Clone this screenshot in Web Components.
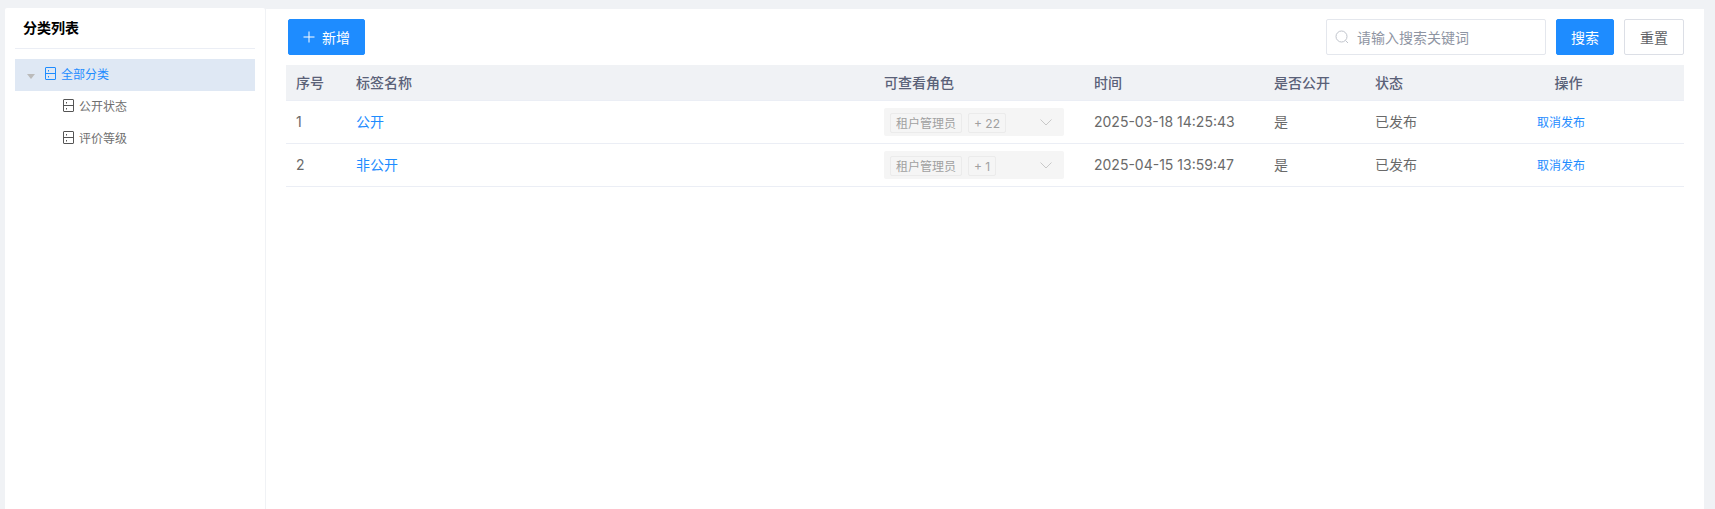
<!DOCTYPE html>
<html lang="zh">
<head>
<meta charset="utf-8">
<title>分类列表</title>
<style>
html, body { margin: 0; height: 100%; background: #f0f2f5; overflow: hidden; }
body { font-family: Inter, "Noto Sans CJK SC", sans-serif; font-size: 14px; }
</style>
</head>
<body>
<app-page></app-page>
<script>
const FOLDER_ICON = /* html */ `
<svg width="11" height="13" viewBox="0 0 11 13" fill="none" stroke="currentColor" stroke-width="1">
  <rect x=".5" y=".5" width="10" height="12" rx=".5"/>
  <path d="M.5 6.500h10M3.500 3v1.500M3.500 9v1.500"/>
</svg>`;

class TreeNode extends HTMLElement {
  constructor() {
    super();
    const root = this.attachShadow({ mode: 'open' });
    root.innerHTML = /* html */ `
<style>
:host {
  display: flex;
  align-items: center;
  height: 32px;
  padding-left: 48px;
  color: #707070;
  font-size: 12px;
}
:host([selected]) {
  background: #dfe8f4;
  color: #1e8cff;
  padding-left: 12px;
}
.arrow {
  display: none;
  width: 0;
  height: 0;
  margin: 2px 10px 0 0;
  border: 4px solid transparent;
  border-top: 5px solid #bbb;
  border-bottom: 0;
}
:host([selected]) .arrow { display: block; }
.icon { display: flex; margin: -3px 5px 0 0; color: #555; }
:host([selected]) .icon { color: #1e8cff; }
.label { padding-bottom: 4px; }
</style>
<span class="arrow"></span>
<span class="icon">${FOLDER_ICON}</span>
<span class="label"><slot></slot></span>`;
  }
}
customElements.define('tree-node', TreeNode);

class CategoryTree extends HTMLElement {
  constructor() {
    super();
    const root = this.attachShadow({ mode: 'open' });
    root.innerHTML = /* html */ `
<style>
:host {
  display: block;
  flex: none;
  width: 240px;
  padding: 0 10px;
  background: #fff;
  border-radius: 2px 2px 0 0;
}
h2 {
  height: 40px;
  margin: 0 0 10px;
  padding-left: 8px;
  border-bottom: 1px solid #ebeef5;
  color: #000;
  font-size: 14px;
  font-weight: 600;
  line-height: 39px;
}
</style>
<h2>分类列表</h2>
<tree-node selected>全部分类</tree-node>
<tree-node>公开状态</tree-node>
<tree-node>评价等级</tree-node>`;
  }
}
customElements.define('category-tree', CategoryTree);

class AppButton extends HTMLElement {
  constructor() {
    super();
    const root = this.attachShadow({ mode: 'open' });
    root.innerHTML = /* html */ `
<style>
:host {
  display: inline-flex;
  align-items: center;
  justify-content: center;
  box-sizing: border-box;
  height: 36px;
  border: 1px solid #dcdfe6;
  border-radius: 2px;
  background: #fff;
  color: #606266;
  font-size: 14px;
  cursor: pointer;
}
:host([primary]) {
  border-color: #1e8cff;
  background: #1e8cff;
  color: #fff;
}
</style>
<slot></slot>`;
  }
}
customElements.define('app-button', AppButton);

class SearchBox extends HTMLElement {
  constructor() {
    super();
    const root = this.attachShadow({ mode: 'open' });
    root.innerHTML = /* html */ `
<style>
:host {
  display: flex;
  align-items: center;
  box-sizing: border-box;
  width: 220px;
  height: 36px;
  padding-left: 8px;
  border: 1px solid #e4e7ed;
  border-radius: 2px;
  background: #fff;
  color: #8f95a3;
  font-size: 14px;
}
svg { flex: none; margin-right: 8px; }
</style>
<svg width="14" height="14" viewBox="0 0 14 14" fill="none" stroke="#c0c4cc" stroke-width="1">
  <circle cx="6.500" cy="6.500" r="5.500"/>
  <path d="M10.500 10.500l2.500 2.500"/>
</svg>
<slot></slot>`;
  }
}
customElements.define('search-box', SearchBox);

class TagToolbar extends HTMLElement {
  constructor() {
    super();
    const root = this.attachShadow({ mode: 'open' });
    root.innerHTML = /* html */ `
<style>
:host {
  display: flex;
  align-items: center;
  height: 36px;
  margin: 0 20px 10px 22px;
}
.spacer { flex: 1; }
.add { width: 77px; gap: 7px; }
.search { width: 58px; margin: 0 10px; }
.reset { width: 60px; }
svg { flex: none; }
</style>
<app-button primary class="add">
  <svg width="12" height="12" viewBox="0 0 12 12" stroke="#fff" stroke-width="1"><path d="M6 .5v11M.5 6h11"/></svg>
  <span>新增</span>
</app-button>
<span class="spacer"></span>
<search-box>请输入搜索关键词</search-box>
<app-button primary class="search">搜索</app-button>
<app-button class="reset">重置</app-button>`;
  }
}
customElements.define('tag-toolbar', TagToolbar);

class RoleSelect extends HTMLElement {
  constructor() {
    super();
    const root = this.attachShadow({ mode: 'open' });
    const count = this.getAttribute('count');
    root.innerHTML = /* html */ `
<style>
:host {
  display: flex;
  align-items: center;
  gap: 6px;
  box-sizing: border-box;
  width: 180px;
  height: 28px;
  padding-left: 6px;
  border-radius: 2px;
  background: #f5f5f5;
  color: #a0a0a0;
  font-size: 12px;
}
.tag {
  height: 18px;
  margin-top: 2px;
  padding: 0 5px;
  border: 1px solid #ebebeb;
  border-radius: 2px;
  line-height: 20px;
  white-space: nowrap;
}
svg { flex: none; margin: 0 12px 0 auto; }
</style>
<span class="tag">租户管理员</span>
<span class="tag">+ ${count}</span>
<svg width="12" height="7" viewBox="0 0 12 7" fill="none" stroke="#c8c8c8" stroke-width="1"><path d="M.5.500 6 6l5.500-5.500"/></svg>`;
  }
}
customElements.define('role-select', RoleSelect);

const COLUMNS = '60px 528px 210px 180px 101px 88px 231px';

class TagTable extends HTMLElement {
  constructor() {
    super();
    const root = this.attachShadow({ mode: 'open' });
    root.innerHTML = /* html */ `
<style>
:host {
  display: block;
  margin: 0 20px;
  color: #6a6a6a;
  font-size: 14px;
}
.row {
  display: grid;
  grid-template-columns: ${COLUMNS};
  align-items: center;
  box-sizing: border-box;
  height: 43px;
  border-bottom: 1px solid #ebeef5;
}
.head {
  height: 36px;
  background: #f0f2f5;
  color: #5a6178;
  font-weight: 500;
}
.cell { padding: 0 0 2px 10px; white-space: nowrap; }
.select { padding-bottom: 0; }
.op { padding-left: 0; text-align: center; }
.link-op { padding: 0 15px 2px 0; font-size: 12px; text-align: center; }
a { color: #1e8cff; text-decoration: none; }
</style>
<div class="row head">
  <div class="cell">序号</div>
  <div class="cell">标签名称</div>
  <div class="cell">可查看角色</div>
  <div class="cell">时间</div>
  <div class="cell">是否公开</div>
  <div class="cell">状态</div>
  <div class="cell op">操作</div>
</div>
${[
  ['1', '公开', '22', '2025-03-18 14:25:43'],
  ['2', '非公开', '1', '2025-04-15 13:59:47'],
].map(([no, name, count, time]) => /* html */ `
<div class="row">
  <div class="cell">${no}</div>
  <div class="cell"><a href="#">${name}</a></div>
  <div class="cell select"><role-select count="${count}"></role-select></div>
  <div class="cell">${time}</div>
  <div class="cell">是</div>
  <div class="cell">已发布</div>
  <div class="cell link-op"><a href="#">取消发布</a></div>
</div>`).join('')}`;
  }
}
customElements.define('tag-table', TagTable);

class AppPage extends HTMLElement {
  constructor() {
    super();
    const root = this.attachShadow({ mode: 'open' });
    root.innerHTML = /* html */ `
<style>
:host {
  display: flex;
  gap: 1px;
  box-sizing: border-box;
  height: 509px;
  padding: 8px 11px 0 5px;
}
main {
  flex: 1;
  min-width: 0;
  margin-top: 1px;
  padding-top: 10px;
  background: #fff;
}
</style>
<category-tree></category-tree>
<main>
  <tag-toolbar></tag-toolbar>
  <tag-table></tag-table>
</main>`;
  }
}
customElements.define('app-page', AppPage);
</script>
</body>
</html>
